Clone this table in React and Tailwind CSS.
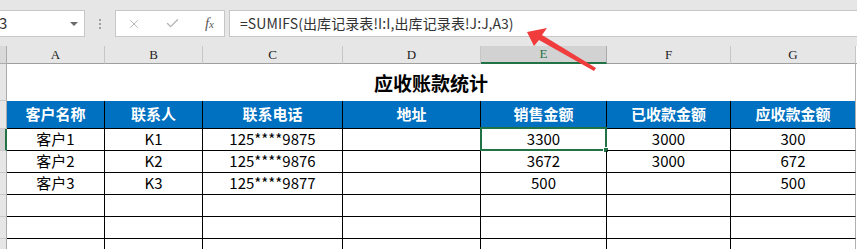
import { X, Check } from 'lucide-react';

const cols = ['A', 'B', 'C', 'D', 'E', 'F', 'G'];
const headers = ['客户名称', '联系人', '联系电话', '地址', '销售金额', '已收款金额', '应收款金额'];
const rows = [
  ['客户1', 'K1', '125****9875', '', '3300', '3000', '300'],
  ['客户2', 'K2', '125****9876', '', '3672', '3000', '672'],
  ['客户3', 'K3', '125****9877', '', '500', '', '500'],
  ['', '', '', '', '', '', ''],
  ['', '', '', '', '', '', ''],
  ['', '', '', '', '', '', ''],
];

const cjk = { fontFamily: '"Microsoft YaHei", "Noto Sans CJK SC", sans-serif' };

function RowHead({ active, className = '' }) {
  return (
    <div
      className={`${active ? 'bg-[#d2d2d2] border-r-2 border-r-[#217346]' : 'bg-[#e6e6e6] border-r border-r-[#ababab]'} border-b border-b-[#c8c8c8] ${className}`}
    />
  );
}

function FormulaBar() {
  return (
    <div className="h-[46px] bg-[#e6e6e6] flex items-start pt-[10px]">
      {/* name box */}
      <div className="w-[85px] h-[27px] bg-white border border-[#c6c6c6] border-l-0 flex items-center justify-between pr-[6px]">
        <span className="text-[15px] text-[#333] -ml-[1px]" style={cjk}>3</span>
        <span className="w-0 h-0 border-l-[4px] border-r-[4px] border-t-[4px] border-l-transparent border-r-transparent border-t-[#6a6a6a]" />
      </div>
      <div className="w-[30px] h-[27px] flex flex-col items-center justify-center gap-[2px]">
        <span className="w-[2px] h-[2px] bg-[#a0a0a0]" />
        <span className="w-[2px] h-[2px] bg-[#a0a0a0]" />
        <span className="w-[2px] h-[2px] bg-[#a0a0a0]" />
      </div>
      {/* cancel / enter / insert function */}
      <div className="w-[110px] h-[27px] bg-white border border-[#c6c6c6] flex items-center pl-[11px] pr-[10px] justify-between">
        <X size={14} strokeWidth={1.6} color="#b4b4b4" />
        <Check size={15} strokeWidth={2.2} color="#b4b4b4" />
        <span className="italic text-[15px] text-[#595959] leading-none" style={{ fontFamily: '"Liberation Serif", serif' }}>
          f<span className="text-[11px]">x</span>
        </span>
      </div>
      <div className="ml-[4px] flex-1 h-[27px] bg-white border border-[#c6c6c6] border-r-0 flex items-center pl-[10px]">
        <span className="text-[14px] text-[#333] tracking-[0.1px]" style={cjk}>
          =SUMIFS(出库记录表!I:I,出库记录表!J:J,A3)
        </span>
      </div>
    </div>
  );
}

export default function App() {
  return (
    <div className="relative w-[857px] h-[249px] overflow-hidden bg-white">
      <FormulaBar />
      <div className="grid grid-cols-[7px_98px_98px_140px_138px_126px_124px_125px_1px]">
        {/* column letters */}
        <div className="h-[18px] bg-[#d9d9d9] border-r border-b border-[#ababab]" />
        {cols.map((c) => (
          <div
            key={c}
            className={`h-[18px] flex items-center justify-center text-[13px] ${
              c === 'E'
                ? 'bg-[#d2d2d2] text-[#217346] border-b-2 border-b-[#217346] border-r border-r-[#ababab]'
                : 'bg-[#e6e6e6] text-[#222] border-b border-b-[#9f9f9f] border-r border-r-[#c6c6c6]'
            }`}
            style={{ fontFamily: '"Liberation Serif", "DejaVu Serif", serif' }}
          >
            {c}
          </div>
        ))}
        <div className="h-[18px] bg-white border-b border-[#9f9f9f]" />

        {/* title row */}
        <RowHead className="h-[37px]" />
        <div className="col-span-7 h-[37px] flex items-center justify-center pt-[2px] border-r border-[#b0b0b0]">
          <span className="text-[19px] font-bold text-black" style={cjk}>应收账款统计</span>
        </div>
        <div className="bg-white" />

        {/* table header */}
        <RowHead className="h-[28px]" />
        {headers.map((h, i) => (
          <div
            key={h}
            className={`h-[28px] bg-[#0070c0] border-b border-black flex items-center justify-center ${i < 6 ? 'border-r border-r-black' : 'border-r border-r-[#b0b0b0]'}`}
          >
            <span className="text-[15px] font-bold text-white" style={cjk}>{h}</span>
          </div>
        ))}
        <div className="bg-white" />

        {/* data rows */}
        {rows.map((r, ri) => (
          <div key={ri} className="contents">
            <RowHead className="h-[22px]" active={ri === 0} />
            {r.map((v, ci) => (
              <div
                key={ci}
                className={`relative h-[22px] border-b border-black flex items-center justify-center ${ci < 6 ? 'border-r border-r-black' : 'border-r border-r-[#b0b0b0]'}`}
              >
                <span className="text-[15px] text-black" style={cjk}>{v}</span>
                {ri === 0 && ci === 4 && (
                  <div className="absolute -left-[1px] -top-[2px] -right-[1px] -bottom-[1px] border-2 border-[#217346]">
                    <div className="absolute -right-[4px] -bottom-[4px] w-[6px] h-[6px] bg-[#217346] border border-white" />
                  </div>
                )}
              </div>
            ))}
            <div className="bg-white" />
          </div>
        ))}
      </div>

      {/* callout arrow */}
      <svg className="absolute left-0 top-0 pointer-events-none" width="857" height="249">
        <polygon points="527,32 547,28 542,35 596,68 594,71 539,40 534,46" fill="#f03c3c" />
      </svg>
    </div>
  );
}
